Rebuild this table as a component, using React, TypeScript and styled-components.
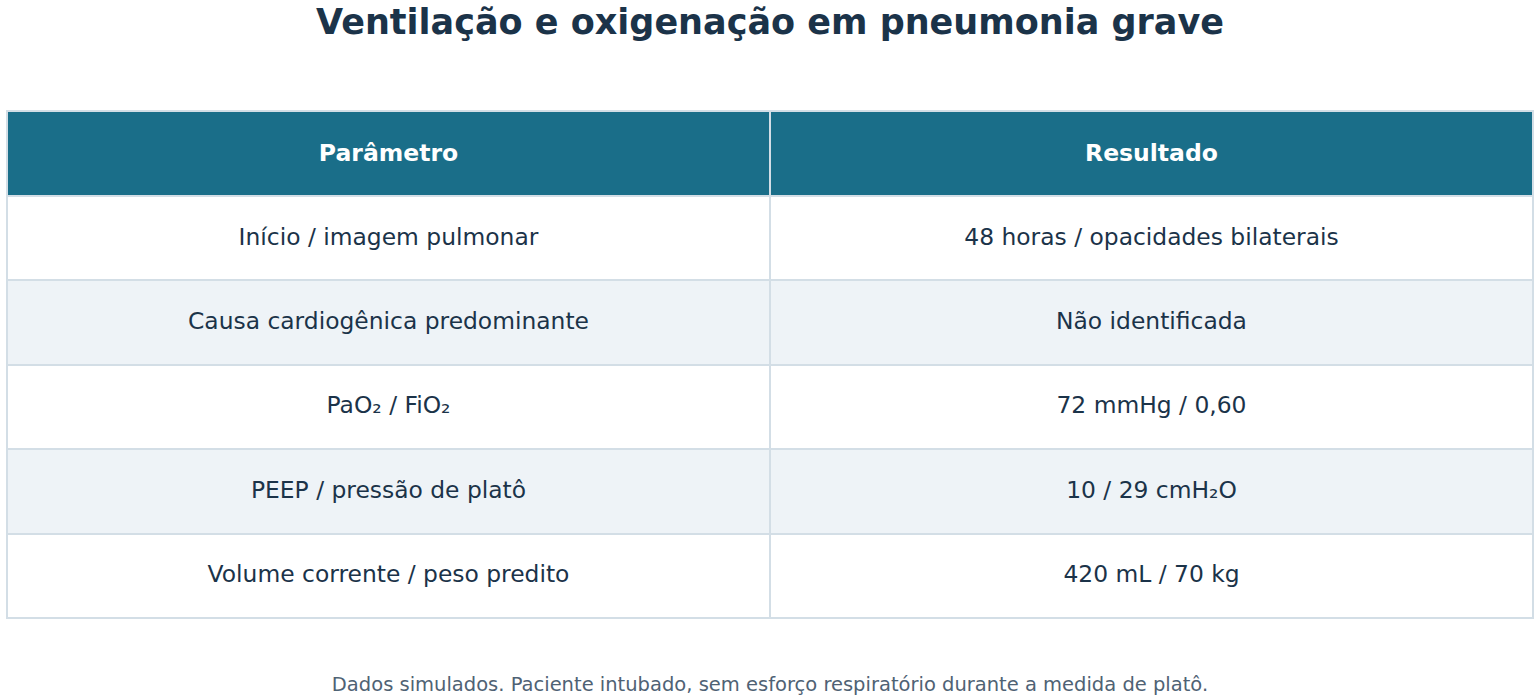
import React from "react";
import styled, { createGlobalStyle } from "styled-components";

const Global = createGlobalStyle`
  html, body { margin: 0; padding: 0; background: #ffffff; }
  body { font-family: "DejaVu Sans", "Noto Sans", sans-serif; }
`;

const Page = styled.div`
  width: 1540px;
  height: 700px;
  overflow: hidden;
  box-sizing: border-box;
  padding: 0 6px;
  display: flex;
  flex-direction: column;
  align-items: stretch;
`;

const Title = styled.h1`
  margin: 0;
  height: 44px;
  line-height: 44px;
  text-align: center;
  font-size: 35px;
  font-weight: 700;
  color: #1b3349;
`;

const Table = styled.table`
  margin-top: 66px;
  width: 100%;
  border-collapse: collapse;
  table-layout: fixed;
  border: 2px solid #d3dee6;
`;

const HeadCell = styled.th`
  height: 81px;
  background: #1a6e89;
  color: #ffffff;
  font-size: 23.5px;
  font-weight: 700;
  text-align: center;
  border: 2px solid #d3dee6;
  padding: 0 0 2px;
`;

const Row = styled.tr<{ $alt: boolean }>`
  background: ${(p) => (p.$alt ? "#eef3f7" : "#ffffff")};
`;

const Cell = styled.td`
  height: 79.4px;
  color: #1b3349;
  font-size: 23.4px;
  text-align: center;
  border: 2px solid #d3dee6;
  padding: 0 0 3px;
`;

const Note = styled.p`
  margin: 54px 0 0;
  text-align: center;
  font-size: 19.5px;
  color: #4f6274;
`;

const rows: [string, string][] = [
  ["Início / imagem pulmonar", "48 horas / opacidades bilaterais"],
  ["Causa cardiogênica predominante", "Não identificada"],
  ["PaO₂ / FiO₂", "72 mmHg / 0,60"],
  ["PEEP / pressão de platô", "10 / 29 cmH₂O"],
  ["Volume corrente / peso predito", "420 mL / 70 kg"],
];

export default function App() {
  return (
    <Page>
      <Global />
      <Title>Ventilação e oxigenação em pneumonia grave</Title>
      <Table>
        <thead>
          <tr>
            <HeadCell>Parâmetro</HeadCell>
            <HeadCell>Resultado</HeadCell>
          </tr>
        </thead>
        <tbody>
          {rows.map(([a, b], i) => (
            <Row key={a} $alt={i % 2 === 1}>
              <Cell>{a}</Cell>
              <Cell>{b}</Cell>
            </Row>
          ))}
        </tbody>
      </Table>
      <Note>Dados simulados. Paciente intubado, sem esforço respiratório durante a medida de platô.</Note>
    </Page>
  );
}
